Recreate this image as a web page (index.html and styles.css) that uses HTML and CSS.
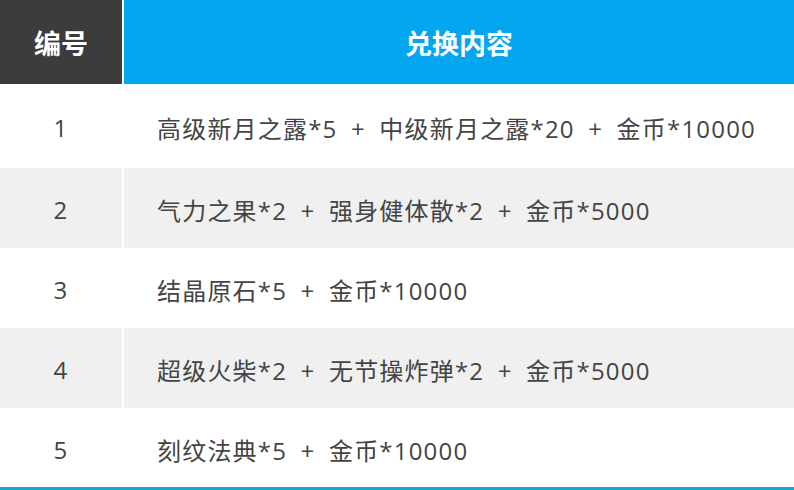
FILE: index.html
```html
<!DOCTYPE html>
<html lang="zh-CN">
<head>
<meta charset="utf-8">
<link rel="stylesheet" href="styles.css">
</head>
<body>
<div class="table">
  <div class="row head">
    <div class="cell num">编号</div>
    <div class="cell content">兑换内容</div>
  </div>
  <div class="row first">
    <div class="cell num">1</div>
    <div class="cell content">高级新月之露*5 + 中级新月之露*20 + 金币*10000</div>
  </div>
  <div class="row alt">
    <div class="cell num">2</div>
    <div class="cell content">气力之果*2 + 强身健体散*2 + 金币*5000</div>
  </div>
  <div class="row">
    <div class="cell num">3</div>
    <div class="cell content">结晶原石*5 + 金币*10000</div>
  </div>
  <div class="row alt">
    <div class="cell num">4</div>
    <div class="cell content">超级火柴*2 + 无节操炸弹*2 + 金币*5000</div>
  </div>
  <div class="row last">
    <div class="cell num">5</div>
    <div class="cell content">刻纹法典*5 + 金币*10000</div>
  </div>
</div>
</body>
</html>
```
FILE: styles.css
```css
html, body {
  margin: 0;
  padding: 0;
  background: #ffffff;
}
body {
  width: 794px;
  height: 490px;
  overflow: hidden;
  font-family: "Open Sans", "Noto Sans CJK SC", sans-serif;
  color: #444444;
}
.table {
  display: flex;
  flex-direction: column;
  border-bottom: 3px solid #16a4dc;
}
.row {
  display: grid;
  grid-template-columns: 122px 1fr;
  column-gap: 2px;
  height: 80px;
}
.row.head { height: 84px; }
.row.first { height: 84px; }
.row.last { height: 79px; }
.cell {
  display: flex;
  align-items: center;
  font-size: 24px;
  letter-spacing: 1.2px;
  word-spacing: 6px;
  padding-top: 3px;
  box-sizing: border-box;
}
.num {
  justify-content: center;
}
.content {
  padding-left: 33px;
  white-space: nowrap;
}
.row.alt .cell {
  background: #f0f0f0;
}
.row.head .cell {
  color: #ffffff;
  font-weight: 700;
  font-size: 27px;
  letter-spacing: 0;
  word-spacing: 0;
  padding-top: 0;
  font-family: "Noto Sans CJK SC", sans-serif;
}
.row.head .num {
  background: #3c3c3c;
}
.row.head .content {
  background: #05a6f0;
  justify-content: center;
  padding-left: 0;
}
```
